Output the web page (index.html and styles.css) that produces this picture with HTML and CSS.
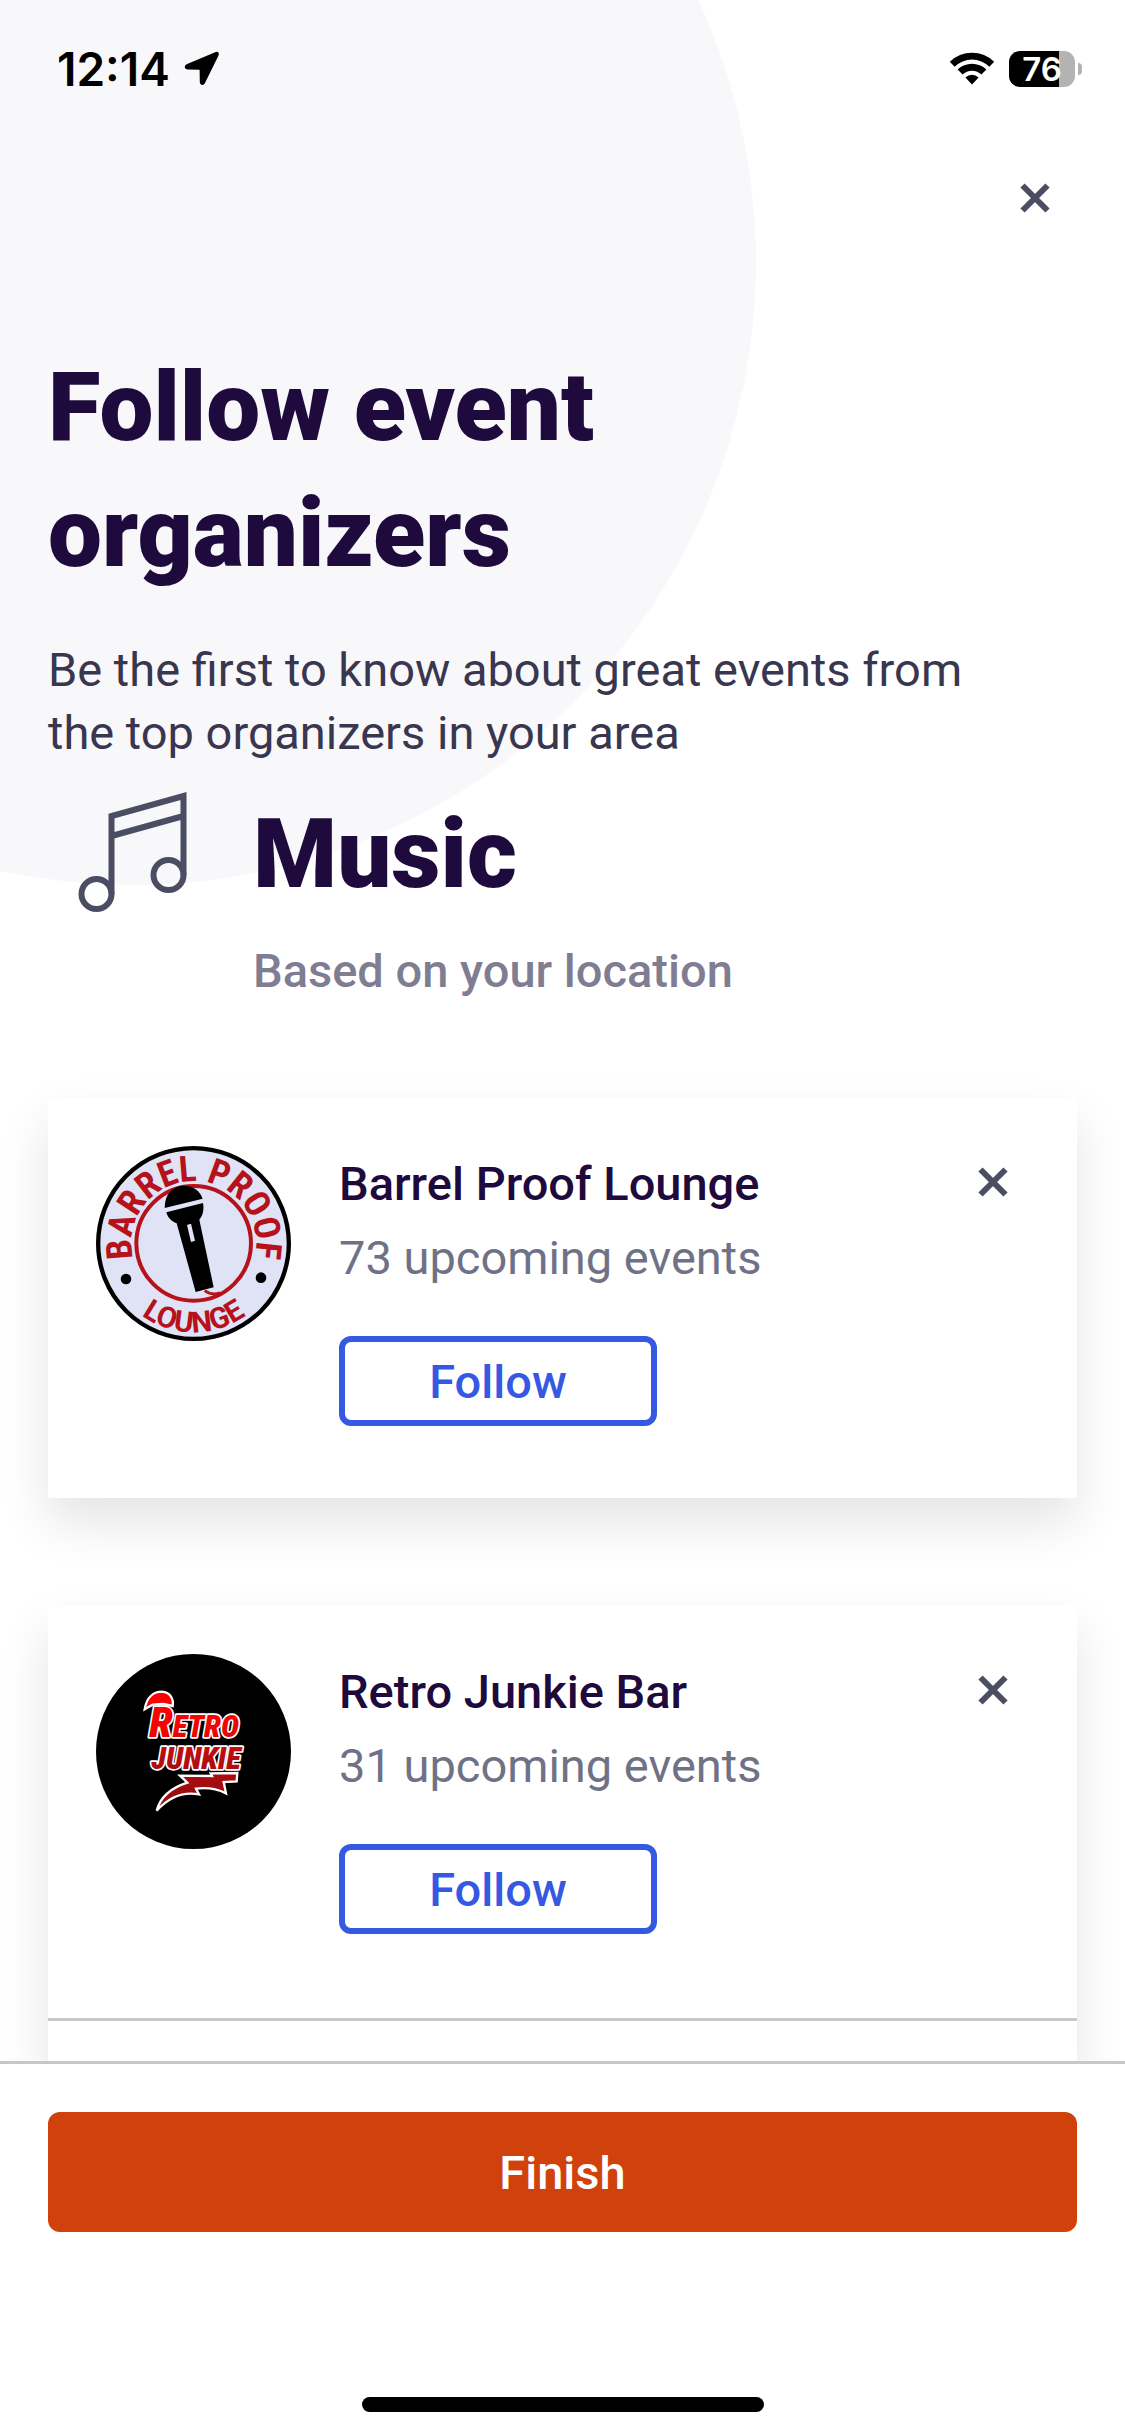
FILE: index.html
```
<!DOCTYPE html>
<html lang="en">
<head>
<meta charset="utf-8">
<meta name="viewport" content="width=device-width, initial-scale=1">
<title>Follow event organizers</title>
<link rel="stylesheet" href="styles.css">
</head>
<body>
<div class="backdrop" aria-hidden="true"></div>

<div class="status">
  <div class="status-group">
    <span class="clock">12:14</span>
    <svg class="location" viewBox="0 0 36 36" aria-hidden="true"><path d="M30.500 1.400 L2.600 13.200 Q.500 14.300 .700 16.200 Q1.200 18.500 3.800 18.500 L15.600 18.700 L15.800 31 Q15.900 33.600 18 34 Q20 34.200 21.100 31.800 L34.300 5 Q35.600 2 33.800 .900 Q32.400 .500 30.500 1.400 Z"/></svg>
  </div>
  <div class="status-group">
    <svg class="wifi" viewBox="0 0 46 34" role="img" aria-label="Wi-Fi"><path d="M.800 9.800A31.500 31.500 0 0 1 45.200 9.800L40.300 14.700A24.600 24.600 0 0 0 5.700 14.700Z"/><path d="M8.600 17.600A20.500 20.500 0 0 1 37.400 17.600L32.400 22.500A13.500 13.500 0 0 0 13.600 22.500Z"/><path d="M16.400 25.400A9.400 9.400 0 0 1 29.600 25.400L23 32.500Z"/></svg>
    <div class="battery"><span class="battery-cell">76</span><span class="battery-tip"></span></div>
  </div>
</div>

<header class="topbar">
  <button class="close close-page" type="button" aria-label="Close"><svg viewBox="0 0 30 30" aria-hidden="true"><path d="M2.500 2.500 27.500 27.500M27.500 2.500 2.500 27.500"/></svg></button>
</header>

<main class="content">
  <h1 class="title">Follow event<br>organizers</h1>
  <p class="lead">Be the first to know about great events from the top organizers in your area</p>

  <section class="category">
    <svg class="note" viewBox="0 0 110 122" aria-hidden="true"><circle cx="18.500" cy="103" r="15"/><circle cx="90.500" cy="84" r="15"/><path d="M33.500 103V25L105.500 5V84M33.500 45 105.500 25"/></svg>
    <div class="category-text">
      <h2 class="title">Music</h2>
      <p class="basis">Based on your location</p>
    </div>
  </section>

  <article class="card">
    <div class="organizer">
      <svg class="avatar" viewBox="48 48 585 585" role="img" aria-label="Barrel Proof Lounge logo">
        <defs>
          <path id="arcTop" d="M157 371A187 187 0 1 1 526 370"/>
          <path id="arcBottom" d="M90 429A266 266 0 0 0 592 429"/>
        </defs>
        <circle cx="340.500" cy="340.500" r="286" fill="#e0e3f6" stroke="#000" stroke-width="13"/>
        <circle cx="341" cy="340" r="172" fill="none" stroke="#b5121b" stroke-width="12"/>
        <text class="ring-text"><textPath href="#arcTop" startOffset="50%">BARREL PROOF</textPath></text>
        <text class="ring-text ring-text-low"><textPath href="#arcBottom" startOffset="50%">LOUNGE</textPath></text>
        <circle cx="138" cy="447" r="16"/><circle cx="543" cy="443" r="16"/>
        <path d="M254 234C254 194 276 169 308 167C340 166 361 184 368 206Z"/>
        <path d="M259 247 369 219C373 240 368 258 358 269L401 472 347 486 290 280C275 275 263 263 259 247Z"/>
        <path d="M321 285 333 281 345 332 333 336Z" fill="#e0e3f6"/>
        <path d="M374 482Q394 497 420 489" fill="none" stroke="#b5121b" stroke-width="9"/>
      </svg>
      <div class="details">
        <h3 class="name">Barrel Proof Lounge</h3>
        <p class="count">73 upcoming events</p>
        <button class="follow" type="button">Follow</button>
      </div>
      <button class="close" type="button" aria-label="Dismiss Barrel Proof Lounge"><svg viewBox="0 0 30 30" aria-hidden="true"><path d="M2.500 2.500 27.500 27.500M27.500 2.500 2.500 27.500"/></svg></button>
    </div>
  </article>

  <article class="card card-open">
    <div class="organizer">
      <svg class="avatar" viewBox="48 42 585 585" role="img" aria-label="Retro Junkie Bar logo">
        <defs>
          <linearGradient id="redFade" gradientUnits="userSpaceOnUse" x1="0" y1="160" x2="0" y2="480"><stop offset="0" stop-color="#ff0000"/><stop offset=".35" stop-color="#f00505"/><stop offset=".6" stop-color="#b50d10"/><stop offset="1" stop-color="#980c10"/></linearGradient>
        </defs>
        <circle cx="340.500" cy="334.500" r="292.500"/>
        <text class="brand-text" x="208" y="290"><tspan class="brand-cap">R</tspan>ETRO</text>
        <path class="brand-shape" d="M194 208C200 170 222 155 246 155C270 157 282 176 278 198L250 192 218 194Z"/>
        <text class="brand-text" x="214" y="386">JUNKIE</text>
        <path class="brand-shape" d="M472 399 470 424 431 426 438 460Q398 440 348 446L357 463Q286 450 230 512Q246 452 322 428L300 407 396 408 392 400Z"/>
      </svg>
      <div class="details">
        <h3 class="name">Retro Junkie Bar</h3>
        <p class="count">31 upcoming events</p>
        <button class="follow" type="button">Follow</button>
      </div>
      <button class="close" type="button" aria-label="Dismiss Retro Junkie Bar"><svg viewBox="0 0 30 30" aria-hidden="true"><path d="M2.500 2.500 27.500 27.500M27.500 2.500 2.500 27.500"/></svg></button>
    </div>
  </article>
</main>

<footer class="footer">
  <button class="finish" type="button">Finish</button>
  <div class="home-bar"></div>
</footer>
</body>
</html>
```
FILE: styles.css
```
* { box-sizing: border-box; }

body {
  position: relative;
  display: flex;
  flex-direction: column;
  min-height: 100vh;
  margin: 0;
  overflow-x: hidden;
  background: #fff;
  color: #1e0a3c;
  font-family: Roboto, "Liberation Sans", sans-serif;
  font-size: 47px;
  line-height: 63px;
}

h1, h2, h3, p { margin: 0; }

button {
  padding: 0;
  border: 0;
  background: none;
  font: inherit;
  cursor: pointer;
}

/* Large tinted disc behind the heading */
.backdrop {
  position: absolute;
  z-index: -1;
  top: -361px;
  left: -490px;
  width: 1246px;
  height: 1246px;
  border-radius: 50%;
  background: #f8f7fa;
}

.status {
  display: flex;
  align-items: center;
  justify-content: space-between;
  height: 138px;
  padding: 0 43px 0 57px;
  color: #000;
  font-family: Inter, "Liberation Sans", sans-serif;
}

.status-group { display: flex; align-items: center; gap: 14px; }
.clock { font-size: 46px; font-weight: 600; }
.location { width: 36px; height: 36px; }
.wifi { width: 46px; height: 34px; }
.battery { display: flex; align-items: center; gap: 3px; }

.battery-cell {
  width: 66px;
  height: 36px;
  border-radius: 11px;
  background: linear-gradient(90deg, #000 76%, #b3b3b3 76%);
  color: #fff;
  font-size: 33px;
  font-weight: 600;
  line-height: 36px;
  text-align: center;
}

.battery-tip {
  width: 4px;
  height: 12px;
  border-radius: 0 4px 4px 0;
  background: #b3b3b3;
}

.topbar { display: flex; justify-content: flex-end; padding: 12px 42px 0; }

.close {
  display: flex;
  flex: none;
  align-items: center;
  justify-content: center;
  width: 72px;
  height: 72px;
}

.close-page { width: 96px; height: 96px; }

.close svg {
  width: 30px;
  height: 30px;
  fill: none;
  stroke: #4b4d63;
  stroke-width: 6;
}

.content {
  display: flex;
  flex: 1;
  flex-direction: column;
  padding: 98px 48px 0;
}

.title { font-size: 96px; font-weight: 900; line-height: 126px; }
.lead { max-width: 960px; margin-top: 42px; color: #39364f; }

.category { display: flex; gap: 65px; margin: 27px 0 96px; padding-left: 30px; }

.note {
  width: 110px;
  height: 122px;
  fill: none;
  stroke: #4b4d63;
  stroke-width: 6;
}

.basis { margin-top: 22px; color: #7f7d92; font-weight: 500; }

.card {
  background: #fff;
  box-shadow: 0 24px 48px rgba(0, 0, 0, .11);
}

.card + .card { margin-top: 108px; }
.card-open { flex: 1; }

.organizer { display: flex; gap: 48px; padding: 48px 48px 72px; }
.card-open .organizer { padding-bottom: 84px; border-bottom: 3px solid #c7c7c9; }
.avatar { flex: none; width: 195px; height: 195px; }
.details { flex: 1; padding-top: 6px; }
.name { font-size: 47px; font-weight: 500; }
.count { margin-top: 11px; color: #6f7287; }

.follow {
  width: 318px;
  height: 90px;
  margin-top: 47px;
  border: 6px solid #3659e3;
  border-radius: 12px;
  color: #3659e3;
  font-weight: 500;
}

.ring-text {
  fill: #b5121b;
  font-family: "Roboto Condensed", "Liberation Sans", sans-serif;
  font-size: 108px;
  font-weight: 700;
  text-anchor: middle;
}

.ring-text-low { font-family: Roboto, "Liberation Sans", sans-serif; font-size: 88px; }

.brand-text {
  fill: url(#redFade);
  stroke: #fff;
  stroke-width: 10;
  stroke-linejoin: round;
  paint-order: stroke;
  font-family: "Roboto Condensed", "Liberation Sans", sans-serif;
  font-size: 92px;
  font-style: italic;
  font-weight: 900;
}

.brand-cap { font-size: 128px; }
.brand-shape { fill: url(#redFade); stroke: #fff; stroke-width: 7; }

.footer {
  position: relative;
  padding: 48px 48px 24px;
  border-top: 3px solid #c7c7c9;
  background: #fff;
}

.finish {
  display: block;
  width: 100%;
  height: 120px;
  border-radius: 12px;
  background: #d1410c;
  color: #fff;
  font-weight: 500;
}

.home-bar {
  width: 402px;
  height: 15px;
  margin: 165px auto 0;
  border-radius: 8px;
  background: #000;
}
```
